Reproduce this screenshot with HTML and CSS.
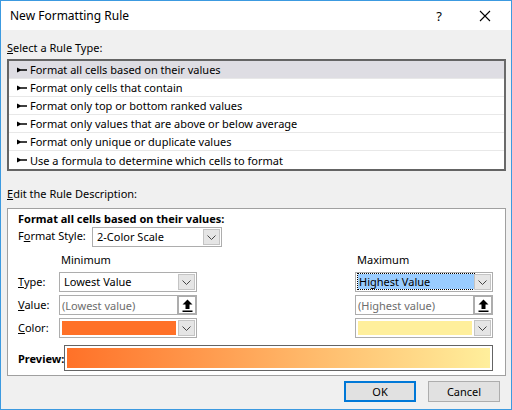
FILE: index.html
```html
<!DOCTYPE html>
<html>
<head>
<meta charset="utf-8">
<link rel="stylesheet" href="styles.css">
</head>
<body>
<div class="window">
  <div class="titlebar">
    <span class="title">New Formatting Rule</span>
    <span class="help">?</span>
    <span class="close"><svg width="12" height="12" viewBox="0 0 12 12"><path d="M1 1L11 11M11 1L1 11" stroke="#000" stroke-width="1.1" fill="none"/></svg></span>
  </div>
  <div class="content">
    <div class="section-label"><u>S</u>elect a Rule Type:</div>
    <div class="listbox">
      <div class="row selected"><svg class="bullet" width="10" height="6" viewBox="0 0 10 6"><path d="M0 0.5L3.5 2.3H10V3.7H3.5L0 5.5Z" fill="#000"/></svg>Format all cells based on their values</div>
      <div class="row"><svg class="bullet" width="10" height="6" viewBox="0 0 10 6"><path d="M0 0.5L3.5 2.3H10V3.7H3.5L0 5.5Z" fill="#000"/></svg>Format only cells that contain</div>
      <div class="row"><svg class="bullet" width="10" height="6" viewBox="0 0 10 6"><path d="M0 0.5L3.5 2.3H10V3.7H3.5L0 5.5Z" fill="#000"/></svg>Format only top or bottom ranked values</div>
      <div class="row"><svg class="bullet" width="10" height="6" viewBox="0 0 10 6"><path d="M0 0.5L3.5 2.3H10V3.7H3.5L0 5.5Z" fill="#000"/></svg>Format only values that are above or below average</div>
      <div class="row"><svg class="bullet" width="10" height="6" viewBox="0 0 10 6"><path d="M0 0.5L3.5 2.3H10V3.7H3.5L0 5.5Z" fill="#000"/></svg>Format only unique or duplicate values</div>
      <div class="row last"><svg class="bullet" width="10" height="6" viewBox="0 0 10 6"><path d="M0 0.5L3.5 2.3H10V3.7H3.5L0 5.5Z" fill="#000"/></svg>Use a formula to determine which cells to format</div>
    </div>
    <div class="section-label second"><u>E</u>dit the Rule Description:</div>
    <div class="desc">
      <div class="desc-title">Format all cells based on their values:</div>
      <div class="style-row">
        <span class="lbl style-lbl">F<u>o</u>rmat Style:</span>
        <div class="combo style-combo"><span class="combo-text">2-Color Scale</span><span class="arrow"><svg width="9" height="5" viewBox="0 0 9 5"><path d="M0.5 0.5L4.5 4.5L8.5 0.5" stroke="#444" stroke-width="1" fill="none"/></svg></span></div>
      </div>
      <div class="grid">
        <span></span>
        <span class="colhead">Minimum</span>
        <span></span>
        <span class="colhead">Maximum</span>

        <span class="lbl"><u>T</u>ype:</span>
        <div class="combo"><span class="combo-text">Lowest Value</span><span class="arrow"><svg width="9" height="5" viewBox="0 0 9 5"><path d="M0.5 0.5L4.5 4.5L8.5 0.5" stroke="#444" stroke-width="1" fill="none"/></svg></span></div>
        <span></span>
        <div class="combo"><span class="combo-text"><span class="hilite">Highest Value</span></span><span class="arrow"><svg width="9" height="5" viewBox="0 0 9 5"><path d="M0.5 0.5L4.5 4.5L8.5 0.5" stroke="#444" stroke-width="1" fill="none"/></svg></span></div>

        <span class="lbl"><u>V</u>alue:</span>
        <div class="input"><span class="placeholder">(Lowest value)</span><span class="ref"><svg width="11" height="13" viewBox="0 0 11 13"><path d="M5.5 0.5L10.5 5.5H7.5V10H3.5V5.5H0.5Z" fill="#000"/><rect x="0.5" y="11.5" width="10" height="1.5" fill="#000"/></svg></span></div>
        <span></span>
        <div class="input"><span class="placeholder">(Highest value)</span><span class="ref"><svg width="11" height="13" viewBox="0 0 11 13"><path d="M5.5 0.5L10.5 5.5H7.5V10H3.5V5.5H0.5Z" fill="#000"/><rect x="0.5" y="11.5" width="10" height="1.5" fill="#000"/></svg></span></div>

        <span class="lbl"><u>C</u>olor:</span>
        <div class="combo color"><span class="swatch orange"></span><span class="arrow"><svg width="9" height="5" viewBox="0 0 9 5"><path d="M0.5 0.5L4.5 4.5L8.5 0.5" stroke="#444" stroke-width="1" fill="none"/></svg></span></div>
        <span></span>
        <div class="combo color"><span class="swatch yellow"></span><span class="arrow"><svg width="9" height="5" viewBox="0 0 9 5"><path d="M0.5 0.5L4.5 4.5L8.5 0.5" stroke="#444" stroke-width="1" fill="none"/></svg></span></div>
      </div>
      <div class="preview-row">
        <span class="preview-lbl">Preview:</span>
        <div class="preview"><div class="gradient"></div></div>
      </div>
    </div>
    <div class="buttons">
      <button class="btn default">OK</button>
      <button class="btn">Cancel</button>
    </div>
  </div>
</div>
</body>
</html>
```

FILE: styles.css
```css
html, body {
  margin: 0;
  padding: 0;
}
body {
  font-family: "Noto Sans", "DejaVu Sans", sans-serif;
  font-size: 11px;
  color: #000;
}
.window {
  width: 512px;
  height: 410px;
  box-sizing: border-box;
  border: 1px solid #3c9ae0;
  background: #f0f0f0;
  display: flex;
  flex-direction: column;
}
.titlebar {
  height: 29px;
  background: #fff;
  display: flex;
  align-items: center;
  flex-shrink: 0;
}
.title {
  font-size: 12px;
  margin-left: 9px;
  flex: 1;
}
.help {
  font-size: 13px;
  width: 20px;
  text-align: center;
  margin-right: 30px;
}
.close {
  width: 14px;
  display: flex;
  margin-right: 18px;
}
.content {
  flex: 1;
  padding: 0 5px 0 6px;
  display: flex;
  flex-direction: column;
}
.section-label {
  height: 16px;
  line-height: 16px;
  margin-top: 10px;
}
.section-label.second {
  margin-top: 15px;
}
.listbox {
  margin-top: 3px;
  border: 2px solid #646464;
  border-right-color: #6a6a6a;
  background: #fff;
}
.row {
  height: 17px;
  line-height: 17px;
  border-bottom: 1px solid #e8e8e8;
  display: flex;
  align-items: center;
  padding-left: 8px;
}
.row.last {
  border-bottom: none;
  height: 18px;
}
.row.selected {
  background: #dedde3;
}
.bullet {
  margin-right: 3px;
  flex-shrink: 0;
}
.desc {
  margin-top: 6px;
  height: 166px;
  border: 1px solid #a0a0a0;
  background: #fff;
  padding: 0 0 0 10px;
}
.desc-title {
  font-weight: bold;
  height: 16px;
  line-height: 16px;
  margin-top: 2px;
}
.style-row {
  display: flex;
  align-items: center;
  margin-top: 0;
  height: 20px;
}
.lbl {
  line-height: 16px;
}
.style-lbl {
  width: 74px;
  margin-top: -3px;
}
.combo {
  height: 20px;
  box-sizing: border-box;
  border: 1px solid #adadad;
  background: #fff;
  display: flex;
  align-items: center;
  padding: 1px;
}
.style-combo {
  width: 130px;
}
.combo-text {
  flex: 1;
  padding-left: 3px;
  line-height: 16px;
}
.hilite {
  display: inline-block;
  background: #99ccff;
  outline: 1px dotted #000;
  outline-offset: 0;
  padding: 0 2px 0 1px;
  margin-left: -2px;
  width: 113px;
  line-height: 15px;
}
.arrow {
  width: 17px;
  height: 16px;
  box-sizing: border-box;
  background: #e5e5e5;
  border: 1px solid #c4c4c4;
  display: flex;
  align-items: center;
  justify-content: center;
}
.grid {
  display: grid;
  grid-template-columns: 41px 138px 158px 138px;
  grid-template-rows: 18px 20px 20px 20px;
  row-gap: 3px;
  align-items: center;
  margin-top: 4px;
}
.colhead {
  padding-left: 2px;
  line-height: 16px;
  align-self: center;
}
.input {
  height: 20px;
  box-sizing: border-box;
  border: 1px solid #adadad;
  background: #fff;
  display: flex;
  align-items: center;
}
.placeholder {
  flex: 1;
  color: #6d6d6d;
  padding-left: 2px;
}
.ref {
  width: 20px;
  height: 20px;
  margin: -1px -1px -1px 0;
  box-sizing: border-box;
  border: 2px solid #adadad;
  background: #fff;
  display: flex;
  align-items: center;
  justify-content: center;
}
.color {
  padding: 2px 1px 2px 2px;
}
.swatch {
  flex: 1;
  height: 14px;
  margin-right: 2px;
}
.orange {
  background: #ff7128;
}
.yellow {
  background: #ffef9c;
}
.preview-row {
  display: flex;
  align-items: center;
  margin-top: 7px;
}
.preview-lbl {
  font-weight: bold;
  width: 46px;
}
.preview {
  width: 429px;
  height: 26px;
  box-sizing: border-box;
  border: 1px solid #646464;
  padding: 2px;
  background: #fff;
}
.gradient {
  height: 100%;
  background: linear-gradient(to right, #ff7128, #ffef9c);
}
.buttons {
  display: flex;
  justify-content: flex-end;
  gap: 12px;
  margin-top: 5px;
  padding-right: 6px;
}
.btn {
  width: 72px;
  height: 21px;
  box-sizing: border-box;
  border: 1px solid #adadad;
  background: #e1e1e1;
  font-family: "Noto Sans", "DejaVu Sans", sans-serif;
  font-size: 11px;
  padding: 0;
  color: #000;
}
.btn.default {
  border: 2px solid #0078d7;
}
```
